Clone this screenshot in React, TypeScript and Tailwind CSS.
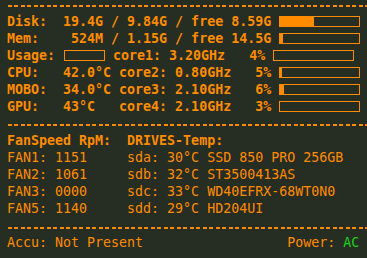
const orange = "text-[#ff8c00]";

function Dashes() {
  return (
    <div className="h-[2px] w-full bg-[repeating-linear-gradient(90deg,#ff8c00_0px,#ff8c00_4px,transparent_4px,transparent_6.5px)]" />
  );
}

function Bar({ fill, width = 81 }: { fill: number; width?: number }) {
  return (
    <div
      className="h-[11px] border border-[#ff8c00] flex"
      style={{ width }}
    >
      <div className="h-full bg-[#ff8c00]" style={{ width: fill }} />
    </div>
  );
}

function Row({ children }: { children: React.ReactNode }) {
  return <div className="h-[17px] flex items-center whitespace-pre">{children}</div>;
}

export default function App() {
  return (
    <div
      className={`w-[367px] h-[258px] bg-[#262d22] ${orange} text-[13.3px] leading-[17px] overflow-hidden pl-[7px]`}
      style={{ fontFamily: '"DejaVu Sans Mono", monospace' }}
    >
      <div className="pt-[5px] pl-px">
        <Dashes />
      </div>

      {/* system */}
      <div className="mt-[5.5px] font-bold">
        <Row>
          <span>{"Disk:  19.4G / 9.84G / free 8.59G "}</span>
          <Bar fill={34} />
        </Row>
        <Row>
          <span>{"Mem:    524M / 1.15G / free 14.5G "}</span>
          <Bar fill={3} />
        </Row>
        <Row>
          <span>{"Usage: "}</span>
          <div className="ml-px mr-[8px]">
            <Bar fill={0} width={41} />
          </div>
          <span>{"core1: 3.20GHz   4% "}</span>
          <Bar fill={0} />
        </Row>
        <Row>
          <span>{"CPU:   42.0°C core2: 0.80GHz   5% "}</span>
          <Bar fill={2} />
        </Row>
        <Row>
          <span>{"MOBO:  34.0°C core3: 2.10GHz   6% "}</span>
          <Bar fill={4} />
        </Row>
        <Row>
          <span>{"GPU:   43°C   core4: 2.10GHz   3% "}</span>
          <Bar fill={0} />
        </Row>
      </div>

      <div className="mt-[9.5px] pl-px">
        <Dashes />
      </div>

      {/* fans and drives */}
      <div className="mt-[5.5px]">
        <Row>
          <span className="font-bold">{"FanSpeed RpM:  DRIVES-Temp:"}</span>
        </Row>
        <Row>{"FAN1: 1151     sda: 30°C SSD 850 PRO 256GB"}</Row>
        <Row>{"FAN2: 1061     sdb: 32°C ST3500413AS"}</Row>
        <Row>{"FAN3: 0000     sdc: 33°C WD40EFRX-68WT0N0"}</Row>
        <Row>{"FAN5: 1140     sdd: 29°C HD204UI"}</Row>
      </div>

      <div className="mt-[10.5px] pl-px">
        <Dashes />
      </div>

      <div className="mt-[4.5px]">
        <Row>
          <span>{"Accu: Not Present                  Power: "}</span>
          <span className="text-[#1ed21e]">AC</span>
        </Row>
      </div>
    </div>
  );
}
